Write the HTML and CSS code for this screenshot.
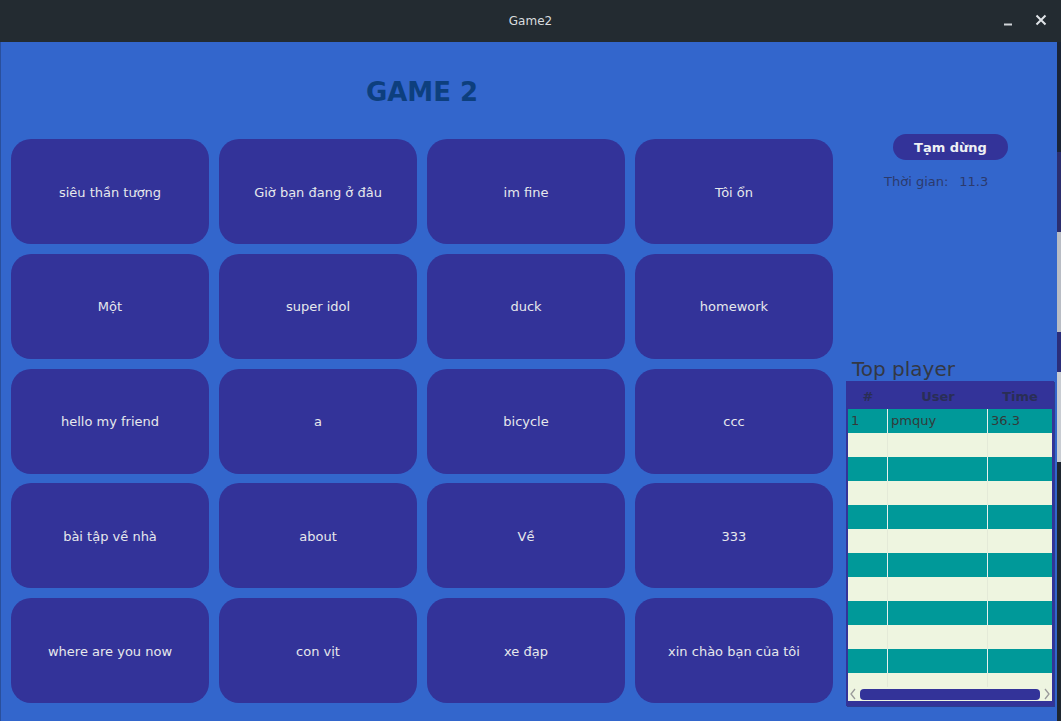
FILE: index.html
```html
<!DOCTYPE html>
<html>
<head>
<meta charset="utf-8">
<link rel="stylesheet" href="styles.css">
</head>
<body>
<div class="window">
  <div class="titlebar">
    <span class="wtitle">Game2</span>
    <div class="wbtns">
      <svg class="wbtn" width="14" height="14" viewBox="0 0 14 14"><path d="M3 11.5h8" stroke="#d0d4d8" stroke-width="2"/></svg>
      <svg class="wbtn" width="14" height="14" viewBox="0 0 14 14"><path d="M2.5 2.5l9 9M11.5 2.5l-9 9" stroke="#e0e4e8" stroke-width="2"/></svg>
    </div>
  </div>
  <div class="content">
    <div class="main">
      <div class="left">
        <h1 class="title">GAME 2</h1>
        <div class="grid">
          <div class="card">siêu thần tượng</div>
          <div class="card">Giờ bạn đang ở đâu</div>
          <div class="card">im fine</div>
          <div class="card">Tôi ổn</div>
          <div class="card">Một</div>
          <div class="card">super idol</div>
          <div class="card">duck</div>
          <div class="card">homework</div>
          <div class="card">hello my friend</div>
          <div class="card">a</div>
          <div class="card">bicycle</div>
          <div class="card">ccc</div>
          <div class="card">bài tập về nhà</div>
          <div class="card">about</div>
          <div class="card">Về</div>
          <div class="card">333</div>
          <div class="card">where are you now</div>
          <div class="card">con vịt</div>
          <div class="card">xe đạp</div>
          <div class="card">xin chào bạn của tôi</div>
        </div>
      </div>
      <div class="right">
        <div class="pause">Tạm dừng</div>
        <div class="timer"><span>Thời gian:</span><span>11.3</span></div>
        <div class="spacer"></div>
        <div class="toplabel">Top player</div>
        <div class="table">
          <div class="row head"><div class="c1">#</div><div class="c2">User</div><div class="c3">Time</div></div>
          <div class="row teal"><div class="c1">1</div><div class="c2">pmquy</div><div class="c3">36.3</div></div>
          <div class="row cream"><div class="c1"></div><div class="c2"></div><div class="c3"></div></div>
          <div class="row teal"><div class="c1"></div><div class="c2"></div><div class="c3"></div></div>
          <div class="row cream"><div class="c1"></div><div class="c2"></div><div class="c3"></div></div>
          <div class="row teal"><div class="c1"></div><div class="c2"></div><div class="c3"></div></div>
          <div class="row cream"><div class="c1"></div><div class="c2"></div><div class="c3"></div></div>
          <div class="row teal"><div class="c1"></div><div class="c2"></div><div class="c3"></div></div>
          <div class="row cream"><div class="c1"></div><div class="c2"></div><div class="c3"></div></div>
          <div class="row teal"><div class="c1"></div><div class="c2"></div><div class="c3"></div></div>
          <div class="row cream"><div class="c1"></div><div class="c2"></div><div class="c3"></div></div>
          <div class="row teal"><div class="c1"></div><div class="c2"></div><div class="c3"></div></div>
          <div class="row cream short"><div class="c1"></div><div class="c2"></div><div class="c3"></div></div>
          <div class="hscroll">
            <svg class="arrow" width="10" height="14" viewBox="0 0 10 14"><path d="M7 2L3 7l4 5" fill="none" stroke="#9a9a9a" stroke-width="1.3"/></svg>
            <div class="thumb"></div>
            <svg class="arrow" width="10" height="14" viewBox="0 0 10 14"><path d="M3 2l4 5-4 5" fill="none" stroke="#9a9a9a" stroke-width="1.3"/></svg>
          </div>
        </div>
      </div>
    </div>
    <div class="edge">
      <div class="e1"></div><div class="e2"></div><div class="e3"></div><div class="e4"></div><div class="e5"></div><div class="e6"></div>
    </div>
  </div>
</div>
</body>
</html>
```
FILE: styles.css
```css
* { box-sizing: border-box; }
html, body { margin: 0; padding: 0; }
body {
  width: 1061px;
  height: 721px;
  overflow: hidden;
  font-family: "DejaVu Sans", sans-serif;
  background: #3366cc;
}
.window { display: flex; flex-direction: column; height: 721px; }
.titlebar {
  height: 42px;
  background: #232b31;
  display: flex;
  align-items: center;
  justify-content: center;
  position: relative;
  flex: none;
}
.wtitle { color: #d8dcdf; font-size: 12px; padding-left: 0; }
.wbtns {
  position: absolute;
  right: 13px;
  top: 13px;
  display: flex;
  gap: 19px;
}
.wbtn { display: block; }
.content { flex: 1; display: flex; }
.main {
  flex: 1;
  display: flex;
  background: #3366cc;
  border-left: 1px solid #2a4f9c;
}
.left { width: 842px; padding-left: 10px; display: flex; flex-direction: column; }
.title {
  margin: 35px 0 0 0;
  height: 30px;
  line-height: 30px;
  font-size: 26px;
  font-weight: bold;
  color: #0d3f7e;
  text-align: center;
  padding-right: 10px;
}
.grid {
  margin-top: 32px;
  display: grid;
  grid-template-columns: repeat(4, 198px);
  grid-auto-rows: 105px;
  column-gap: 10px;
  row-gap: 9.75px;
}
.card {
  background: #333399;
  border-radius: 20px;
  color: #e6e8ec;
  font-size: 13px;
  display: flex;
  align-items: center;
  justify-content: center;
  padding-top: 1px;
}
.right {
  width: 214px;
  display: flex;
  flex-direction: column;
  align-items: stretch;
  padding-left: 3px;
  padding-right: 3px;
}
.pause {
  margin-top: 92px;
  margin-left: 47px;
  width: 115px;
  height: 26px;
  border-radius: 13px;
  background: #333399;
  color: #eef0f4;
  font-weight: bold;
  font-size: 13px;
  display: flex;
  align-items: center;
  justify-content: center;
}
.timer {
  margin-top: 13px;
  margin-left: 38px;
  display: flex;
  gap: 11px;
  font-size: 13px;
  color: #2c3a6c;
  line-height: 18px;
}
.spacer { height: 167px; }
.toplabel {
  font-size: 20px;
  color: #333844;
  line-height: 22px;
  padding-left: 6px;
  height: 23px;
}
.table {
  width: 208px;
  height: 325px;
  border: 2px solid #333399;
  border-top-width: 1px;
  border-bottom-width: 5px;
  background: #eef5e0;
  display: flex;
  flex-direction: column;
  overflow: hidden;
  box-shadow: 1px 1px 0 #2d3d8f;
}
.row { display: flex; height: 24px; flex: none; }
.row > div {
  font-size: 13px;
  color: #333a3a;
  line-height: 24px;
  padding-left: 3px;
}
.c1 { width: 40px; }
.c2 { width: 100px; }
.c3 { flex: 1; }
.head { height: 27px; background: #333399; }
.head > div {
  font-weight: bold;
  text-align: center;
  color: #2a2e55;
  line-height: 29px;
  padding-left: 0;
}
.teal { background: #009999; }
.teal .c1, .teal .c2 { border-right: 1px solid #e8f0ee; }
.cream { background: #eef5e0; }
.cream .c1, .cream .c2 { border-right: 1px solid #e4ead8; }
.short { height: 14px; }
.hscroll {
  height: 14px;
  display: flex;
  align-items: center;
  background: #eef5e0;
  flex: none;
}
.arrow { display: block; flex: none; width: 10px; }
.thumb {
  flex: 1;
  height: 11px;
  margin: 0 2px;
  background: #333399;
  border-radius: 4px;
}
.edge {
  width: 4px;
  display: flex;
  flex-direction: column;
  background: #1c2330;
}
.e1 { height: 110px; background: #1a2436; }
.e2 { height: 80px; background: #2b2d6e; }
.e3 { height: 100px; background: #b8bcc4; }
.e4 { height: 40px; background: #2b2d7a; }
.e5 { height: 90px; background: #c8ccd2; }
.e6 { flex: 1; background: #1e2630; }
```
